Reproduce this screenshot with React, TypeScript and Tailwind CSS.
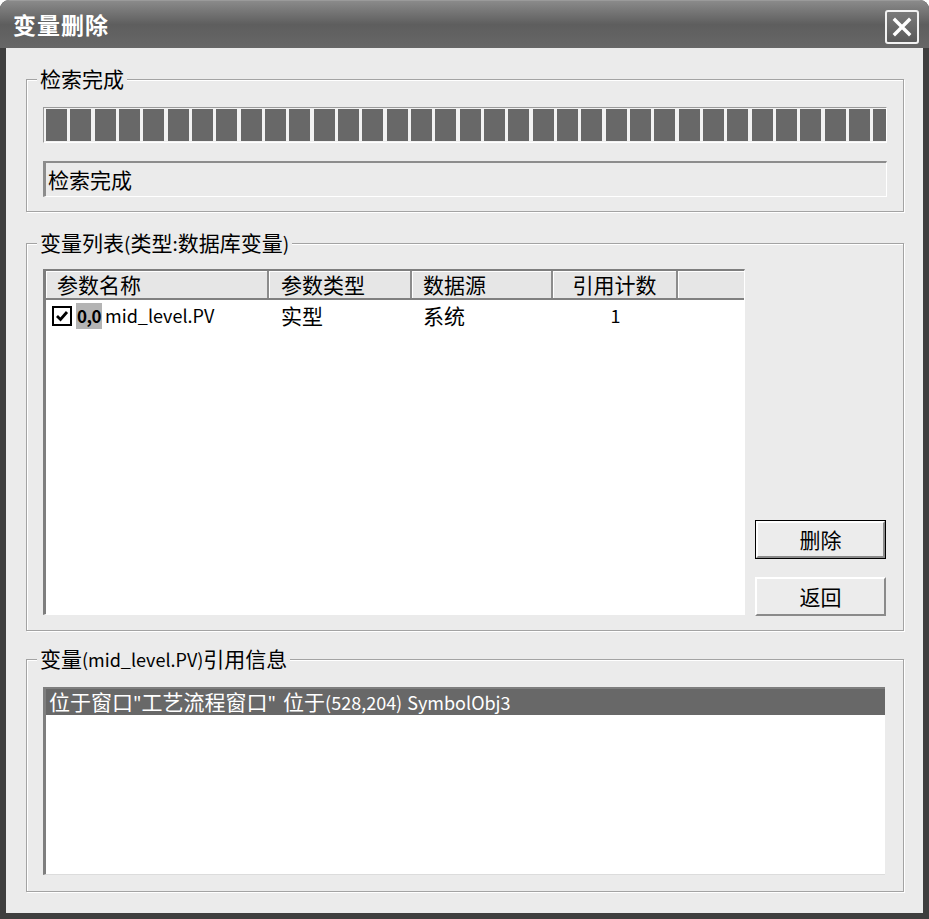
import React from "react";

const FONT = { fontFamily: '"Noto Sans CJK SC", "Noto Sans", sans-serif' };

function GroupBox({
  label,
  className,
  children,
}: {
  label: React.ReactNode;
  className: string;
  children: React.ReactNode;
}) {
  return (
    <div
      className={
        "relative border border-[#a3a3a3] shadow-[inset_1px_1px_0_#ffffff,1px_1px_0_#ffffff] " +
        className
      }
    >
      <span className="absolute left-[10px] top-[-15px] bg-[#ebebeb] px-[3px] text-[21px] leading-[26px] text-black whitespace-nowrap">
        {label}
      </span>
      {children}
    </div>
  );
}

function Checkbox() {
  return (
    <span className="w-[20px] h-[20px] border-[2px] border-black bg-white flex items-center justify-center">
      <svg width="14" height="14" viewBox="0 0 14 14">
        <path d="M2 7 L5.5 10.5 L12 3" stroke="#000" strokeWidth="2.8" fill="none" />
      </svg>
    </span>
  );
}

function Btn({ label, isDefault }: { label: string; isDefault?: boolean }) {
  return (
    <div
      className={
        "w-[131px] h-[39px] " + (isDefault ? "border border-black" : "")
      }
    >
      <div className="w-full h-full bg-[#ececec] border-t-2 border-l-2 border-t-white border-l-white border-b-2 border-r-2 border-b-[#8a8a8a] border-r-[#8a8a8a] flex items-center justify-center text-[21px] text-black">
        {label}
      </div>
    </div>
  );
}

export default function App() {
  const blocks = Array.from({ length: 35 }, (_, i) => i);
  const headers = [
    { t: "参数名称", w: "w-[223px]", a: "justify-start pl-[11px]" },
    { t: "参数类型", w: "w-[143px]", a: "justify-start pl-[12px]" },
    { t: "数据源", w: "w-[141px]", a: "justify-start pl-[11px]" },
    { t: "引用计数", w: "w-[125px]", a: "justify-center" },
    { t: "", w: "flex-1", a: "" },
  ];
  return (
    <div className="w-[929px] h-[919px] bg-white" style={FONT}>
      <div className="w-[929px] h-[919px] bg-[#3e3e3e] rounded-t-[9px] flex flex-col overflow-hidden">
        {/* Title bar */}
        <div className="h-[48px] shrink-0 flex items-center justify-between pl-[13px] pr-[10px] bg-gradient-to-b from-[#8a8a8a] via-[#5e5e5e] to-[#676767] border-t border-[#9a9a9a]">
          <span className="text-white font-bold text-[23px] leading-none tracking-[1px]">
            变量删除
          </span>
          <div className="w-[34px] h-[34px] mt-[4px] rounded-[3px] border-2 border-[#f2f2f2] bg-gradient-to-b from-[#7a7a7a] to-[#5a5a5a] flex items-center justify-center">
            <svg width="22" height="22" viewBox="0 0 22 22">
              <path d="M4 4 L18 18 M18 4 L4 18" stroke="#ffffff" strokeWidth="3.4" strokeLinecap="square" />
            </svg>
          </div>
        </div>

        {/* Client area */}
        <div className="flex-1 mx-[6px] mb-[6px] bg-[#ebebeb] pl-[20px] pr-[19px] pt-[31px] flex flex-col text-black">
          {/* Group 1 */}
          <GroupBox label="检索完成" className="h-[133px] pl-[16px] pt-[27px] flex flex-col">
            <div className="w-[844px] h-[36px] border-t border-l border-t-[#9a9a9a] border-l-[#9a9a9a] border-b border-r border-b-white border-r-white bg-[#f2f2f2] pl-[2px] pr-[4px] py-[1px] overflow-hidden flex gap-[3.33px]">
              {blocks.map((i) => (
                <div key={i} className="w-[21px] h-full shrink-0 bg-[#686868]" />
              ))}
            </div>
            <div className="mt-[18px] w-[844px] h-[36px] border-t-2 border-l-[3px] border-t-[#8c8c8c] border-l-[#8c8c8c] border-b border-r border-b-white border-r-white flex items-center pl-[2px] text-[21px]">
              检索完成
            </div>
          </GroupBox>

          {/* Group 2 */}
          <GroupBox
            label={
              <>
                变量列表<span className="text-[19px]">(</span>类型<span className="text-[19px]">:</span>数据库变量<span className="text-[19px]">)</span>
              </>
            }
            className="mt-[31px] h-[388px] pl-[16px] pt-[25px] flex"
          >
            <div className="w-[702px] h-[346px] border-t-2 border-l-[3px] border-t-[#7e7e7e] border-l-[#7e7e7e] border-r border-b border-r-white border-b-white bg-white flex flex-col">
              <div className="h-[29px] flex bg-[#e6e6e6] border-b-2 border-b-[#808080] text-[21px]">
                {headers.map((h, i) => (
                  <div
                    key={i}
                    className={
                      h.w +
                      " h-full flex items-center " +
                      h.a +
                      " shadow-[inset_1px_1px_0_#ffffff] " +
                      (i < 4 ? "border-r-2 border-r-[#8c8c8c]" : "")
                    }
                  >
                    {h.t}
                  </div>
                ))}
              </div>
              <div className="h-[31px] flex items-center text-[21px]">
                <div className="w-[223px] flex items-center pl-[6px]">
                  <Checkbox />
                  <span className="ml-[4px] bg-[#b4b4b4] px-[1px] h-[26px] flex items-center font-bold text-[17px] tracking-[-0.5px]">
                    0,0
                  </span>
                  <span className="ml-[3px] text-[18px]">mid_level.PV</span>
                </div>
                <div className="w-[143px] pl-[12px]">实型</div>
                <div className="w-[141px] pl-[11px]">系统</div>
                <div className="w-[125px] text-center text-[18px]">1</div>
              </div>
            </div>
            <div className="ml-[10px] mt-[251px] flex flex-col gap-[18px]">
              <Btn label="删除" isDefault />
              <Btn label="返回" />
            </div>
          </GroupBox>

          {/* Group 3 */}
          <GroupBox
            label={
              <>
                变量<span className="text-[18px]">(mid_level.PV)</span>引用信息
              </>
            }
            className="mt-[28px] h-[233px] pl-[16px] pt-[27px]"
          >
            <div className="w-[842px] h-[188px] border-t-2 border-l-[3px] border-t-[#7e7e7e] border-l-[#7e7e7e] border-b border-b-[#dcdcdc] bg-white">
              <div className="h-[26px] bg-[#686868] text-white text-[21px] flex items-center pl-[3px] whitespace-nowrap">
                <span>位于窗口</span>
                <span className="text-[18px]">"</span>
                <span>工艺流程窗口</span>
                <span className="text-[18px]">"</span>
                <span className="ml-[7px]">位于</span>
                <span className="text-[18px]">(528,204)</span>
                <span className="text-[18px] ml-[5px]">SymbolObj3</span>
              </div>
            </div>
          </GroupBox>
        </div>
      </div>
    </div>
  );
}
